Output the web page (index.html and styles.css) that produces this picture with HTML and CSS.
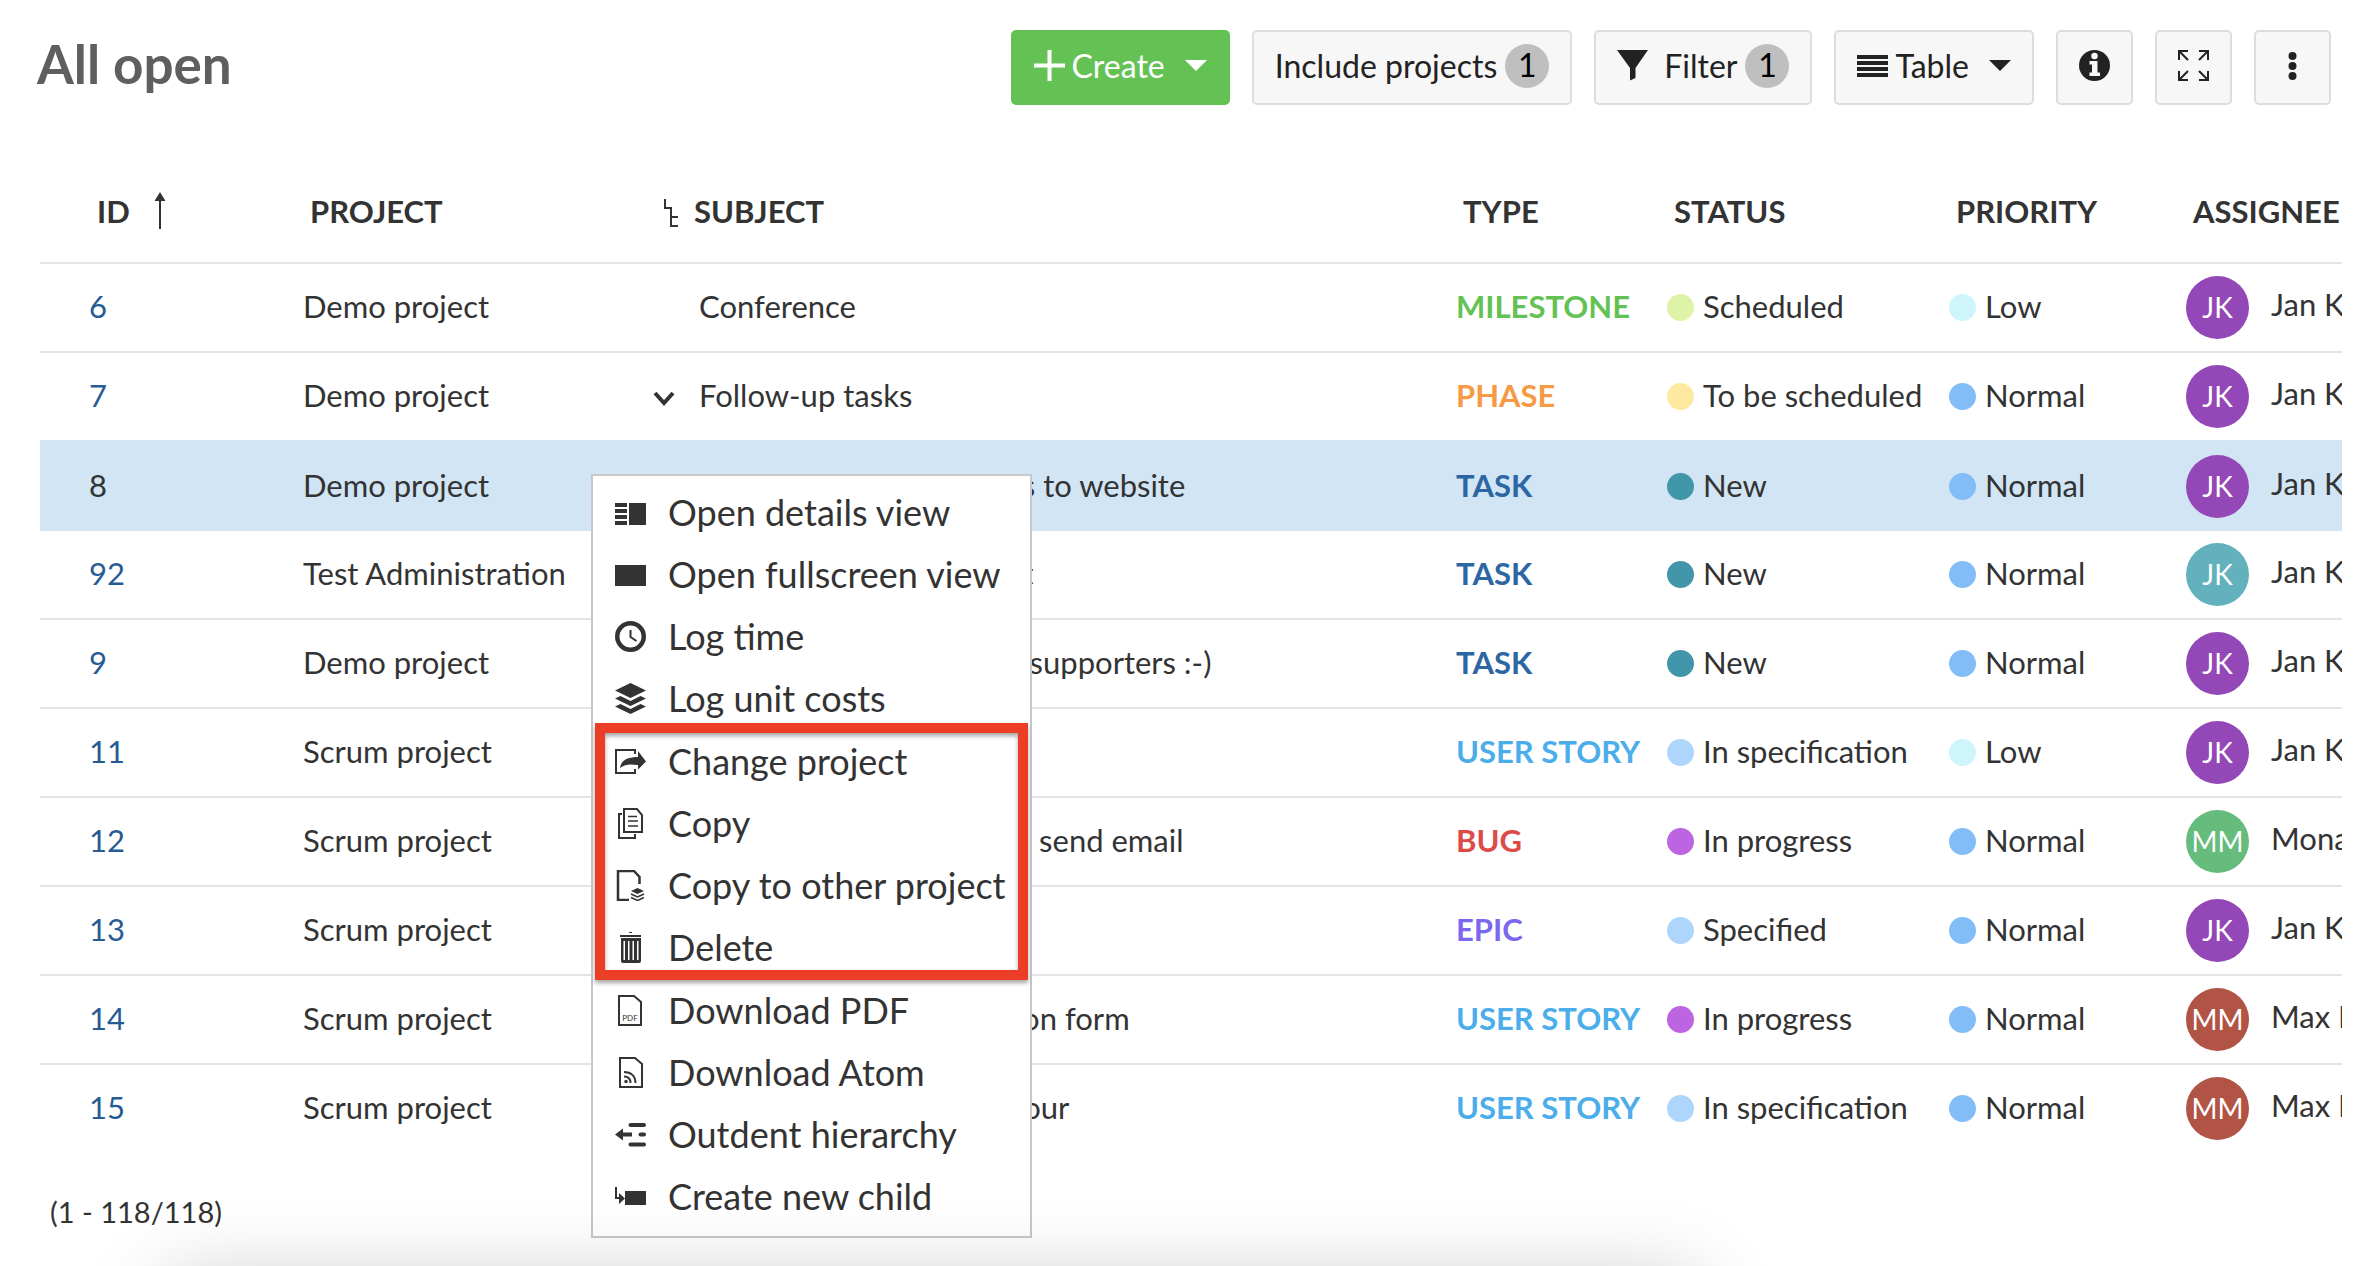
FILE: index.html
```html
<!DOCTYPE html>
<html lang="en">
<head>
<meta charset="utf-8">
<title>All open</title>
<meta name="viewport" content="width=device-width, initial-scale=1">
<link rel="stylesheet" href="styles.css">
</head>
<body>
<header class="toolbar">
  <h1 class="title">All open</h1>
  <div class="actions">
    <button class="btn btn-create" type="button">
      <svg class="icon" viewBox="0 0 31 31"><path d="M13.500 0h4v13.500H31v4H17.500V31h-4V17.500H0v-4h13.500z"/></svg>
      <span>Create</span>
      <svg class="caret" viewBox="0 0 22 11"><path d="M0 0h22L11 11z"/></svg>
    </button>
    <button class="btn" type="button"><span>Include projects</span><span class="badge">1</span></button>
    <button class="btn btn-filter" type="button">
      <svg class="icon" viewBox="0 0 31 31"><path d="M0 0h31L18.500 18v10L13 30.500V18z"/></svg>
      <span>Filter</span><span class="badge">1</span>
    </button>
    <button class="btn" type="button">
      <svg class="icon" viewBox="0 0 31 31"><path d="M0 5h31v4H0zM0 11h31v4H0zM0 17h31v4H0zM0 23h31v4H0z"/></svg>
      <span>Table</span>
      <svg class="caret" viewBox="0 0 22 11"><path d="M0 0h22L11 11z"/></svg>
    </button>
    <button class="btn" type="button" aria-label="Information">
      <svg class="icon" viewBox="0 0 31 31"><circle cx="15.500" cy="15.500" r="15.500"/><circle cx="15.500" cy="6" r="3.250" fill="#f7f7f7"/><path fill="#f7f7f7" d="M10.500 11h8v11.500h2.500v3.500h-10.500v-3.500h2.500v-8h-2.500z"/></svg>
    </button>
    <button class="btn" type="button" aria-label="Full screen">
      <svg class="icon" viewBox="0 0 31 31"><path d="M1 10V1h9M1 1l9 9M21 1h9v9M30 1l-9 9M1 21v9h9M1 30l9-9M21 30h9v-9M30 30l-9-9" fill="none" stroke="#222" stroke-width="2"/></svg>
    </button>
    <button class="btn" type="button" aria-label="More actions">
      <svg class="icon" viewBox="0 0 31 31"><circle cx="15.500" cy="6" r="4"/><circle cx="15.500" cy="16" r="4"/><circle cx="15.500" cy="26" r="4"/></svg>
    </button>
  </div>
</header>

<main class="content">
  <table class="packages">
    <colgroup><col class="col-id"><col class="col-project"><col class="col-subject"><col class="col-type"><col class="col-status"><col class="col-priority"><col class="col-assignee"></colgroup>
    <thead>
      <tr>
        <th class="id">ID<svg class="sort" viewBox="0 0 12 37"><path d="M6 0l5.500 9H7v28H5V9H.5z"/></svg></th>
        <th>PROJECT</th>
        <th class="subject"><svg class="tree" viewBox="0 0 14 28"><path d="M1 0v9h6v18h7M7 18h7" fill="none" stroke="#333" stroke-width="2"/></svg>SUBJECT</th>
        <th>TYPE</th><th>STATUS</th><th>PRIORITY</th><th>ASSIGNEE</th>
      </tr>
    </thead>
    <tbody>
      <tr><td class="id"><a href="#6">6</a></td><td>Demo project</td><td class="subject">Conference</td><td class="type milestone">MILESTONE</td><td><i class="dot scheduled"></i>Scheduled</td><td><i class="dot low"></i>Low</td><td><div class="person"><span class="avatar purple">JK</span><span class="name">Jan K</span></div></td></tr>
      <tr><td class="id"><a href="#7">7</a></td><td>Demo project</td><td class="subject parent"><svg class="chevron" viewBox="0 0 22 16"><path d="M2 2l9 10 9-10" fill="none" stroke="#333" stroke-width="4"/></svg>Follow-up tasks</td><td class="type phase">PHASE</td><td><i class="dot planned"></i>To be scheduled</td><td><i class="dot normal"></i>Normal</td><td><div class="person"><span class="avatar purple">JK</span><span class="name">Jan K</span></div></td></tr>
      <tr class="selected"><td class="id"><a href="#8">8</a></td><td>Demo project</td><td class="subject child">Upload presentations to website</td><td class="type task">TASK</td><td><i class="dot new"></i>New</td><td><i class="dot normal"></i>Normal</td><td><div class="person"><span class="avatar purple">JK</span><span class="name">Jan K</span></div></td></tr>
      <tr><td class="id"><a href="#92">92</a></td><td>Test Administration</td><td class="subject child">Collect feedback text</td><td class="type task">TASK</td><td><i class="dot new"></i>New</td><td><i class="dot normal"></i>Normal</td><td><div class="person"><span class="avatar teal">JK</span><span class="name">Jan K</span></div></td></tr>
      <tr><td class="id"><a href="#9">9</a></td><td>Demo project</td><td class="subject child">Party for conference supporters :-)</td><td class="type task">TASK</td><td><i class="dot new"></i>New</td><td><i class="dot normal"></i>Normal</td><td><div class="person"><span class="avatar purple">JK</span><span class="name">Jan K</span></div></td></tr>
      <tr><td class="id"><a href="#11">11</a></td><td>Scrum project</td><td class="subject">New login screen</td><td class="type story">USER STORY</td><td><i class="dot specified"></i>In specification</td><td><i class="dot low"></i>Low</td><td><div class="person"><span class="avatar purple">JK</span><span class="name">Jan K</span></div></td></tr>
      <tr><td class="id"><a href="#12">12</a></td><td>Scrum project</td><td class="subject">Password reset does not send email</td><td class="type bug">BUG</td><td><i class="dot progress"></i>In progress</td><td><i class="dot normal"></i>Normal</td><td><div class="person"><span class="avatar green">MM</span><span class="name">Mona</span></div></td></tr>
      <tr><td class="id"><a href="#13">13</a></td><td>Scrum project</td><td class="subject">New website</td><td class="type epic">EPIC</td><td><i class="dot specified"></i>Specified</td><td><i class="dot normal"></i>Normal</td><td><div class="person"><span class="avatar purple">JK</span><span class="name">Jan K</span></div></td></tr>
      <tr><td class="id"><a href="#14">14</a></td><td>Scrum project</td><td class="subject child">Newsletter registration form</td><td class="type story">USER STORY</td><td><i class="dot progress"></i>In progress</td><td><i class="dot normal"></i>Normal</td><td><div class="person"><span class="avatar red">MM</span><span class="name">Max M</span></div></td></tr>
      <tr><td class="id"><a href="#15">15</a></td><td>Scrum project</td><td class="subject child">Implement product tour</td><td class="type story">USER STORY</td><td><i class="dot specified"></i>In specification</td><td><i class="dot normal"></i>Normal</td><td><div class="person"><span class="avatar red">MM</span><span class="name">Max M</span></div></td></tr>
    </tbody>
  </table>
</main>
<footer class="pagination">(1 - 118/118)</footer>

<nav class="menu" aria-label="Work package actions">
  <div class="group">
    <button type="button"><svg class="icon" viewBox="0 0 31 31"><path d="M0 6h12v4H0zM0 12h12v4H0zM0 18h12v4H0zM0 24h12v4H0zM14 6h17v22H14z"/></svg>Open details view</button>
    <button type="button"><svg class="icon" viewBox="0 0 31 31"><path d="M0 6h31v21H0z"/></svg>Open fullscreen view</button>
    <button type="button"><svg class="icon" viewBox="0 0 31 31"><circle cx="15.500" cy="15.500" r="13.250" fill="none" stroke="#333" stroke-width="4.500"/><path d="M15.500 9v7l6 4" fill="none" stroke="#333" stroke-width="2"/></svg>Log time</button>
    <button type="button"><svg class="icon" viewBox="0 0 31 31"><path d="M15.500 0L31 7.500 15.500 15 0 7.500zM0 15.500L5.500 13l10 5 10-5 5.500 2.500-15.500 7.500zM0 23.500L5.500 21l10 5 10-5 5.500 2.500L15.500 31z"/></svg>Log unit costs</button>
  </div>
  <div class="group highlighted">
    <button type="button"><svg class="icon" viewBox="0 0 31 31"><path d="M20 8V4H1v23h19v-4" fill="none" stroke="#333" stroke-width="2"/><path d="M5 22C6 14 13 11 23 11V5l8 10.500-8 8V19c-8-1-13-1-18 3z"/></svg>Change project</button>
    <button type="button"><svg class="icon" viewBox="0 0 31 31"><path d="M7 6H4v24h16v-4M9 1h13l5 6v17H9z" fill="none" stroke="#333" stroke-width="2"/><path d="M13 8.500h9M13 13h10M13 18h10" fill="none" stroke="#333" stroke-width="1.500"/></svg>Copy</button>
    <button type="button"><svg class="icon" viewBox="0 0 31 31"><path d="M24.500 14V7L19 1H3v29h11" fill="none" stroke="#333" stroke-width="2.500"/><path d="M22.500 18l6.500 3-6.500 3-6.500-3z"/><path d="M16 24l6.500 3 6.500-3M16 27.500l6.500 3 6.500-3" fill="none" stroke="#333" stroke-width="1.500"/></svg>Copy to other project</button>
    <button type="button"><svg class="icon" viewBox="0 0 31 31"><path d="M14 0h3v1h-3zM5 3h21v2H5z"/><path fill-rule="evenodd" d="M6 6h20v23q0 2-2 2H8q-2 0-2-2zM8.500 9v19h1.500V9zM13 9v19h1.500V9zM17.500 9v19H19V9zM22 9v19h1.500V9z"/></svg>Delete</button>
  </div>
  <div class="group">
    <button type="button"><svg class="icon" viewBox="0 0 31 31"><path d="M4 1h15l7 6v23H4z" fill="none" stroke="#333" stroke-width="2"/><text x="15" y="26" text-anchor="middle" font-size="8">PDF</text></svg>Download PDF</button>
    <button type="button"><svg class="icon" viewBox="0 0 31 31"><path d="M5 1h15l7 6v23H5z" fill="none" stroke="#333" stroke-width="2"/><circle cx="11" cy="24.500" r="1.750"/><path d="M9 19.500c4 0 6.500 2.500 6.500 6.500M9 15c7 0 11.500 4 11.500 11" fill="none" stroke="#333" stroke-width="2"/></svg>Download Atom</button>
    <button type="button"><svg class="icon" viewBox="0 0 31 31"><path d="M0 15.500l8-6v4h9v4H8v4z"/><path d="M15.500 6h13.500M25.500 15.500H29M15.500 25.500H29" fill="none" stroke="#333" stroke-width="4" stroke-linecap="round"/></svg>Outdent hierarchy</button>
    <button type="button"><svg class="icon" viewBox="0 0 31 31"><path d="M0 6h2v10h2v-4l6 5.500L4 23v-5H0zM10 10h21v14H10z"/></svg>Create new child</button>
  </div>
</nav>
<div class="edge-shadow"></div>
</body>
</html>
```
FILE: styles.css
```css
* { box-sizing: border-box; }

body {
  margin: 0;
  min-height: 100vh;
  overflow: hidden;
  background: #fff;
  color: #333;
  font-family: Lato, "Liberation Sans", sans-serif;
  font-size: 31px;
  line-height: 36px;
}

button { font: inherit; color: inherit; margin: 0; cursor: pointer; }
svg { flex: none; fill: currentColor; }
.icon { width: 31px; height: 31px; }

/* Toolbar */
.toolbar {
  display: flex;
  align-items: flex-start;
  justify-content: space-between;
  padding: 30px 27px 0 37px;
}
.title { margin: 0; color: #5f5f5f; font-size: 53px; line-height: 68px; font-weight: 700; }
.actions { display: flex; gap: 22px; }
.btn {
  display: flex;
  align-items: center;
  gap: 7px;
  height: 75px;
  padding: 0 21px 4px;
  border: 2px solid #ddd;
  border-radius: 5px;
  background: #f7f7f7;
  color: #222;
  font-size: 32px;
  white-space: nowrap;
}
.btn-create { border-color: #64c254; background: #64c254; color: #fff; }
.btn-filter .icon { margin-right: 9px; }
.caret { width: 22px; height: 11px; margin-left: 13px; }
.badge {
  width: 44px;
  height: 44px;
  margin-left: 1px;
  border-radius: 50%;
  background: #bfbfbf;
  color: #000;
  line-height: 42px;
  text-align: center;
}

/* Work package table */
.content { padding: 55px 16px 0 40px; }
.packages { width: 100%; table-layout: fixed; border-collapse: separate; border-spacing: 0; }
.col-id { width: 255px; }
.col-project { width: 350px; }
.col-type { width: 211px; }
.col-status { width: 282px; }
.col-priority { width: 237px; }
.col-assignee { width: 164px; }
th, td { padding: 0 0 0 8px; text-align: left; white-space: nowrap; overflow: hidden; }
th { height: 102px; padding-left: 15px; font-weight: 700; }
td { height: 89px; padding-bottom: 4px; border-top: 2px solid #e4e4e4; }
th.id { padding-left: 57px; }
td.id { padding-left: 49px; }
td.subject { padding-left: 54px; }
td.parent { padding-left: 8px; }
td.child { padding-left: 100px; }
th.subject { padding-left: 19px; }
a { color: #275b93; text-decoration: none; }
.sort { width: 12px; height: 37px; margin: -8px 0 -8px 24px; vertical-align: 2px; }
.tree { width: 14px; height: 28px; margin-right: 16px; vertical-align: -4px; }
.chevron { width: 22px; height: 16px; margin-right: 24px; }
.selected td { padding-bottom: 2px; background: #d1e5f4; }
.selected td, .selected + tr td { border-top-color: #d1e5f4; }
.selected a { color: #333; }

.type { font-weight: 700; }
.milestone { color: #64c254; }
.phase { color: #f69a45; }
.task { color: #2c66a3; }
.story { color: #4bade9; }
.bug { color: #dd4b48; }
.epic { color: #7b68ee; }

.dot {
  display: inline-block;
  width: 27px;
  height: 27px;
  margin-right: 9px;
  border-radius: 50%;
  vertical-align: -3px;
}
.scheduled { background: #def3a8; }
.planned { background: #fdeaa0; }
.new { background: #4296aa; }
.specified { background: #aed5fb; }
.progress { background: #bd64e2; }
.low { background: #cef5fb; }
.normal { background: #82bdf8; }

.person { display: flex; align-items: center; gap: 22px; padding-top: 4px; }
.avatar {
  flex: none;
  width: 63px;
  height: 63px;
  border-radius: 50%;
  color: #fff;
  font-size: 28px;
  line-height: 62px;
  text-align: center;
}
.name { padding-bottom: 8px; }
.purple { background: #9447b7; }
.teal { background: #62b1bd; }
.green { background: #66bc7d; }
.red { background: #b15446; }

.pagination { padding: 42px 50px 0; font-size: 29px; }

/* Context menu */
.menu {
  position: absolute;
  left: 591px;
  top: 474px;
  display: flex;
  flex-direction: column;
  gap: 1px;
  width: 441px;
  padding: 6px 0 8px;
  border: 2px solid #c8c8c8;
  background: #fff;
  font-size: 36px;
}
.group { position: relative; display: flex; flex-direction: column; }
.group button {
  display: flex;
  align-items: center;
  gap: 22px;
  height: 62px;
  padding: 0 22px 2px;
  border: 0;
  background: none;
  white-space: nowrap;
}
.highlighted::after {
  content: "";
  position: absolute;
  inset: -8px 2px -1px;
  border: 10px solid #ec3e26;
  filter: drop-shadow(0 3px 2px rgba(0, 0, 0, 0.35));
  pointer-events: none;
}

/* Shadow cast upwards from the lower window edge */
.edge-shadow {
  position: fixed;
  left: 7%;
  right: 28%;
  bottom: -114px;
  height: 100px;
  box-shadow: 0 0 80px rgba(0, 0, 0, 0.22);
  pointer-events: none;
}
```
